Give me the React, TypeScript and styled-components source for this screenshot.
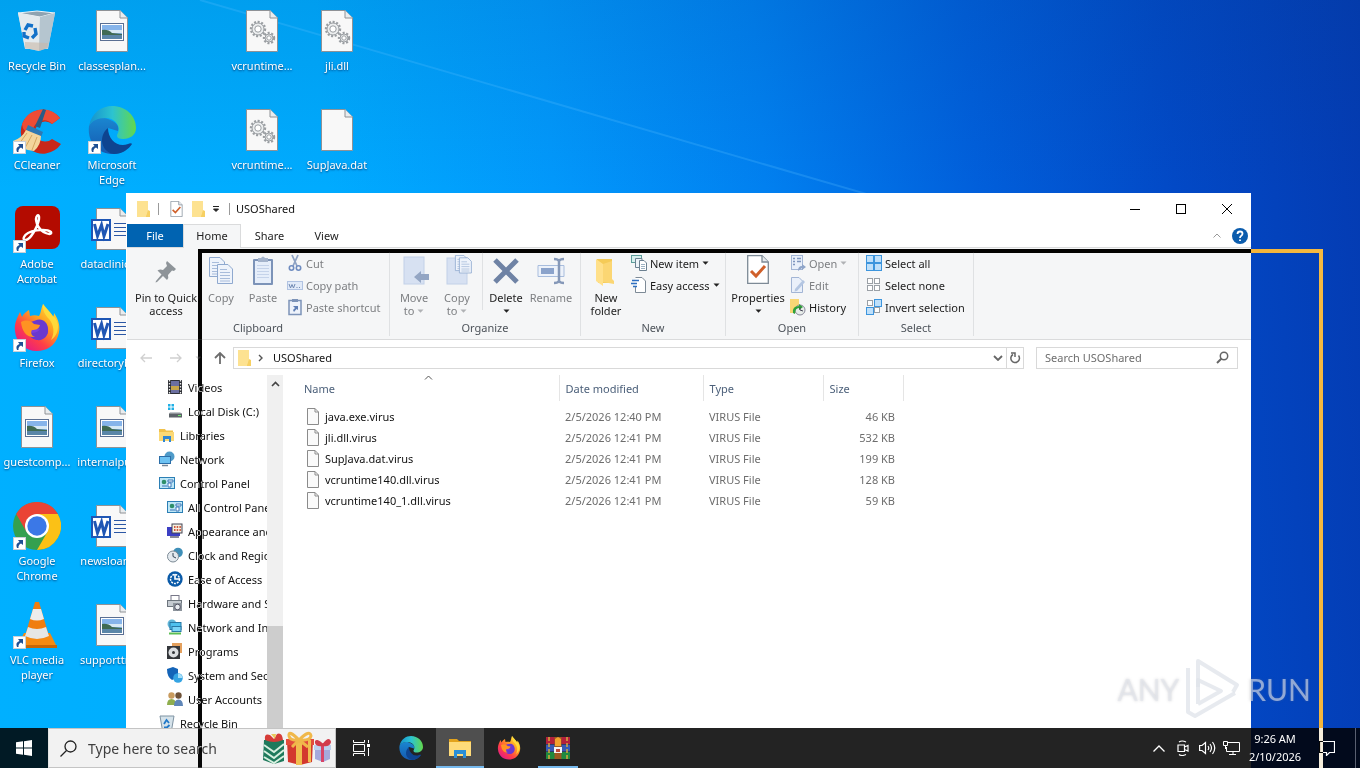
import React from 'react';
import styled, { createGlobalStyle } from 'styled-components';

const GlobalStyle = createGlobalStyle`
  *, *::before, *::after { box-sizing: border-box; }
  body { margin: 0; background: #0357c5; }
  button, input { font: inherit; color: inherit; }
  body, button, input { font-family: 'Noto Sans', 'Open Sans', sans-serif; font-size: 11px; }
  button { border: 0; padding: 0; background: none; }
  svg { display: block; flex: none; }
`;

/* ---------- desktop ---------- */

const Desktop = styled.main`
  position: relative;
  min-height: 100vh;
  overflow: hidden;
  background:
    linear-gradient(180deg, rgba(0, 60, 120, 0.12), rgba(0, 60, 120, 0) 190px),
    linear-gradient(86deg, #00b0ff 0%, #00abff 26%, #0298fb 42%, #0180f0 57%, #015fdb 72%, #0249c6 86%, #043bb2 100%);
`;

const Wallpaper = styled.svg`
  position: absolute;
  top: 0;
  left: 0;
`;

const IconGrid = styled.ul`
  position: relative;
  display: grid;
  grid-template-columns: repeat(5, 75px);
  grid-auto-rows: 99px;
  margin: 0;
  padding: 0;
  list-style: none;
`;

const IconCell = styled.li<{ $col: number; $row: number }>`
  grid-column: ${p => p.$col};
  grid-row: ${p => p.$row};
`;

const DesktopButton = styled.button`
  display: flex;
  flex-direction: column;
  align-items: center;
  gap: 3px;
  width: 100%;
  padding: 7px 1px 0 0;
  color: #fff;
  line-height: 15px;
  text-align: center;
  text-shadow: 0 1px 2px rgba(0, 30, 80, 0.75);
`;

const IconArt = styled.span`
  position: relative;
  width: 48px;
  height: 48px;
`;

const IconLabel = styled.span`
  max-width: 70px;
`;

const ShortcutBadge = styled.svg`
  position: absolute;
  left: 0;
  bottom: 0;
`;

function RecycleBin() {
  return (
    <svg width="48" height="48" viewBox="0 0 48 48">
      <path d="M5 6 L42 6 L35 42 L12 42Z" fill="#c9d6de" />
      <path d="M5 6 L24 4 L42 6 L27 10Z" fill="#8fa3b1" stroke="#eef4f8" strokeWidth="1" />
      <path d="M5 6 L27 10 L26 44 L12 41Z" fill="#e3eaee" />
      <path d="M27 10 L42 6 L35 41 L26 44Z" fill="#b5c5cf" />
      <path d="M12 35 L35 36 L34 41 L26 44 L12 41Z" fill="#c8b8a8" opacity=".6" />
      <g fill="none" stroke="#1271c9" strokeWidth="3.4">
        <path d="M12 23 L15 18 L20 19" />
        <path d="M22 21 L23 27 L19 31" />
        <path d="M16 31 L11 29 L11 25" />
      </g>
    </svg>
  );
}

function Page({ children }: { children?: React.ReactNode }) {
  return (
    <svg width="48" height="48" viewBox="0 0 48 48">
      <path d="M8.500 3.500 H32 L39.500 11 V44.500 H8.500Z" fill="#f8f8f8" stroke="#8f9296" />
      <path d="M32 3.500 V11 H39.500" fill="#e9ecee" stroke="#8f9296" />
      {children}
    </svg>
  );
}

const PicturePage = () => (
  <Page>
    <rect x="12.500" y="16.500" width="23" height="17" fill="#fff" stroke="#5a6f93" />
    <rect x="14" y="18" width="20" height="14" fill="#86b4ea" />
    <path d="M14 23 h20 v3 h-20z" fill="#d7e9f5" />
    <path d="M14 23 Q20 22 24 26 L34 27 V29 H14Z" fill="#3f6a53" />
    <path d="M14 28 H34 V32 H14Z" fill="#5a86a8" />
  </Page>
);

const Gear = ({ x, y, r }: { x: number; y: number; r: number }) => (
  <g transform={`translate(${x} ${y})`} fill="none" stroke="#9a9ea2">
    <circle r={r} strokeWidth="2.400" strokeDasharray="2 1.6" />
    <circle r={r - 1} fill="#eceeef" strokeWidth="1" />
    <circle r={r / 2 - 0.3} fill="#fff" strokeWidth="1" />
  </g>
);

const GearPage = () => (
  <Page>
    <Gear x={20} y={22} r={7} />
    <Gear x={31} y={31} r={5} />
  </Page>
);

const BlankPage = () => <Page />;

const WordPage = () => (
  <Page>
    <path d="M26 18.500 H46 M26 22.500 H46 M26 26.500 H46 M26 30.500 H46" stroke="#2b57a5" />
    <rect x="3" y="14" width="20" height="22" fill="#1f56b4" />
    <rect x="5" y="16" width="16" height="18" fill="#fff" />
    <path d="M6.500 19 L9.500 31 L13.500 20 L16 31 L20 19" fill="none" stroke="#1f56b4" strokeWidth="3" />
  </Page>
);

function CCleaner() {
  return (
    <svg width="48" height="48" viewBox="0 0 48 48">
      <path d="M47 12 A22 22 0 1 0 48 38 L39 33 A10 10 0 1 1 39 18Z" fill="#c8281a" />
      <path d="M47 12 A22 22 0 0 0 9 18 Q10 28 20 26 A11 11 0 0 1 39 18Z" fill="#ee4c35" />
      <path d="M30 3 L33 4 L27 22 L22 20Z" fill="#2a5c86" />
      <path d="M15 19 L30 26 L28 31 L13 24Z" fill="#2e78b4" />
      <path d="M13 24 L28 30 Q28 39 21 45 Q8 44 0 35 Q9 32 13 24Z" fill="#f4d59c" />
      <path d="M14 27 L6 38 M19 29 L12 42 M24 31 L19 44" stroke="#d5a660" />
    </svg>
  );
}

function Edge({ size }: { size: number }) {
  return (
    <svg width={size} height={size} viewBox="0 0 48 48">
      <defs>
        <linearGradient id="edgeTop" x1="0" x2="1">
          <stop offset="0" stopColor="#1592cf" />
          <stop offset=".5" stopColor="#2cc3d0" />
          <stop offset="1" stopColor="#63d84b" />
        </linearGradient>
        <linearGradient id="edgeLeft" x1="0" x2="0" y1="0" y2="1">
          <stop offset="0" stopColor="#1a86d0" />
          <stop offset="1" stopColor="#1559b0" />
        </linearGradient>
      </defs>
      <path d="M1 20 C5 12 14 11 20 13 C28 16 32 20 30 25 L20 22 C14 30 20 42 32 43 C37 43 41 40 44 37 C40 44 33 48 25 48 C10 48 -1 36 1 20Z" fill="url(#edgeLeft)" />
      <path d="M1 20 C4 6 14 0 24 0 C38 0 48 10 48 22 C48 29 42 33 35 33 C29 33 28 30 30 27 C33 20 27 12 17 12 C9 12 4 15 1 20Z" fill="url(#edgeTop)" />
      <path d="M20 22 C10 30 13 46 26 48 C34 48 41 43 44 38 C43 37 42 37 40 38 C30 42 20 34 20 22Z" fill="#0e4490" />
    </svg>
  );
}

function Acrobat() {
  return (
    <svg width="48" height="48" viewBox="0 0 48 48">
      <rect x="2" y="1" width="45" height="43" rx="8" fill="#b30b00" />
      <path d="M11 32 C14 25 33 23 38 27 C40 31 28 29 24 19 C21 10 27 7 26 14 C25 21 17 36 12 35 C11 35 10 34 11 32Z" fill="none" stroke="#fff" strokeWidth="2.400" />
    </svg>
  );
}

function Firefox({ size }: { size: number }) {
  return (
    <svg width={size} height={size} viewBox="0 0 48 48">
      <defs>
        <linearGradient id="fox" x1="1" x2="0.200" y1="0" y2="1">
          <stop offset="0" stopColor="#fff04a" />
          <stop offset=".4" stopColor="#ffa31f" />
          <stop offset=".7" stopColor="#ff3f46" />
          <stop offset="1" stopColor="#e2168c" />
        </linearGradient>
      </defs>
      <path d="M30 0 C33 5 38 8 40 13 C41 11 41 10 41 9 C46 16 48 24 45 32 C42 42 33 47 24 47 C12 47 3 39 2 27 C1 20 4 14 7 8 L9 13 C11 9 14 7 16 6 L17 12 C20 11 23 11 26 12 C28 9 28 4 30 0Z" fill="url(#fox)" />
      <circle cx="25" cy="26" r="10" fill="#7a3fe0" />
      <path d="M22 17 C28 13 35 18 35 25 C36 32 30 37 24 36 C18 35 15 31 15 27 C19 30 25 29 27 25 L19 23 L13 21 C16 18 20 17 22 17Z" fill="#6b38cf" />
      <path d="M8 18 C14 15 18 17 21 20 L27 21 C26 25 23 26 19 26 C17 29 19 32 22 33 C14 34 9 28 8 18Z" fill="#ff9322" />
      <path d="M30 0 C29 6 32 11 36 15 C41 21 42 29 38 36 C46 31 48 18 40 12Z" fill="#ffdf3c" opacity=".85" />
    </svg>
  );
}

function Chrome() {
  return (
    <svg width="48" height="48" viewBox="0 0 48 48">
      <circle cx="24" cy="24" r="24" fill="#34a04f" />
      <path d="M3.200 12 A24 24 0 0 1 44.800 12 L24 12 L13.600 30Z" fill="#ea4335" />
      <path d="M44.800 12 A24 24 0 0 1 24 48 L34.400 30 L24 12Z" fill="#fbc116" />
      <circle cx="24" cy="24" r="12" fill="#fff" />
      <circle cx="24" cy="24" r="9.700" fill="#3b78e7" />
    </svg>
  );
}

function Vlc() {
  return (
    <svg width="48" height="48" viewBox="0 0 48 48">
      <path d="M11 32 H37 L44 46 H4Z" fill="#f58a12" />
      <path d="M4 44 H44 V47 H4Z" fill="#c86606" />
      <path d="M22 1 H26 L36 35 Q24 41 12 35Z" fill="#f07d10" />
      <path d="M20 8 H28 L31 18 Q24 21 17 18Z" fill="#ececec" />
      <path d="M15 26 Q24 30 33 26 L36 35 Q24 41 12 35Z" fill="#e6e6e6" />
    </svg>
  );
}

function Shortcut() {
  return (
    <ShortcutBadge width="13" height="13" viewBox="0 0 13 13">
      <rect x=".5" y=".5" width="12" height="12" fill="#fff" stroke="#c8d0d8" />
      <path d="M5 3 H10 V8 L8 6.500 Q5 8 5.500 11 H4 Q2 6.500 6.500 5Z" fill="#1e4f93" />
    </ShortcutBadge>
  );
}

const desktopIcons: { col: number; row: number; label: string; art: React.ReactNode; link?: boolean }[] = [
  { col: 1, row: 1, label: 'Recycle Bin', art: <RecycleBin /> },
  { col: 1, row: 2, label: 'CCleaner', art: <CCleaner />, link: true },
  { col: 1, row: 3, label: 'Adobe Acrobat', art: <Acrobat />, link: true },
  { col: 1, row: 4, label: 'Firefox', art: <Firefox size={48} />, link: true },
  { col: 1, row: 5, label: 'guestcomp...', art: <PicturePage /> },
  { col: 1, row: 6, label: 'Google Chrome', art: <Chrome />, link: true },
  { col: 1, row: 7, label: 'VLC media player', art: <Vlc />, link: true },
  { col: 2, row: 1, label: 'classesplan...', art: <PicturePage /> },
  { col: 2, row: 2, label: 'Microsoft Edge', art: <Edge size={48} />, link: true },
  { col: 2, row: 3, label: 'dataclinics...', art: <WordPage /> },
  { col: 2, row: 4, label: 'directorybo...', art: <WordPage /> },
  { col: 2, row: 5, label: 'internalpub...', art: <PicturePage /> },
  { col: 2, row: 6, label: 'newsloans...', art: <WordPage /> },
  { col: 2, row: 7, label: 'supporttra...', art: <PicturePage /> },
  { col: 4, row: 1, label: 'vcruntime...', art: <GearPage /> },
  { col: 4, row: 2, label: 'vcruntime...', art: <GearPage /> },
  { col: 5, row: 1, label: 'jli.dll', art: <GearPage /> },
  { col: 5, row: 2, label: 'SupJava.dat', art: <BlankPage /> },
];

/* ---------- explorer window ---------- */

const Window = styled.section`
  position: absolute;
  top: 193px;
  left: 126px;
  right: 109px;
  bottom: 40px;
  display: flex;
  flex-direction: column;
  padding-left: 1px;
  overflow: hidden;
  background: #fff;
  color: #111;
`;

const TitleBar = styled.header`
  display: flex;
  align-items: center;
  height: 31px;
  padding: 0 1px 0 7px;
`;

const QuickButton = styled.button<{ $w?: number }>`
  display: flex;
  align-items: center;
  justify-content: center;
  width: ${p => p.$w ?? 18}px;
  height: 24px;
`;

const TitleRule = styled.span`
  width: 1px;
  height: 12px;
  margin: 0 6px;
  background: #9a9a9a;
`;

const Title = styled.h1`
  flex: 1;
  margin: 0;
  font-size: 11px;
  font-weight: 400;
`;

const CaptionButton = styled.button`
  display: flex;
  align-items: center;
  justify-content: center;
  width: 46px;
  height: 30px;
`;

const TabBar = styled.nav`
  display: flex;
  align-items: stretch;
  height: 24px;
  border-bottom: 1px solid #dadbdc;
`;

const Tab = styled.button<{ $kind?: 'file' | 'active' }>`
  width: ${p => (p.$kind === 'active' ? 58 : p.$kind === 'file' ? 56 : 57)}px;
  height: ${p => (p.$kind === 'active' ? 24 : 23)}px;
  padding-bottom: ${p => (p.$kind === 'active' ? 2 : 0)}px;
  border: ${p => (p.$kind === 'active' ? '1px solid #dadbdc' : '0')};
  border-bottom: 0;
  background: ${p => (p.$kind === 'file' ? '#0063b1' : p.$kind === 'active' ? '#f5f6f7' : 'transparent')};
  color: ${p => (p.$kind === 'file' ? '#fff' : '#222')};
`;

const TabSpacer = styled.span`
  flex: 1;
`;

const TabAction = styled.button`
  display: flex;
  align-items: center;
  justify-content: center;
  width: 23px;
`;

const Ribbon = styled.div`
  display: flex;
  height: 92px;
  padding-top: 4px;
  background: #f5f6f7;
  border-bottom: 1px solid #dadbdc;
`;

const Group = styled.section<{ $w: number }>`
  display: flex;
  flex-direction: column;
  width: ${p => p.$w}px;
  height: 84px;
  border-right: 1px solid #dfe1e3;
`;

const GroupBody = styled.div<{ $pad: number }>`
  display: flex;
  height: 70px;
  padding-left: ${p => p.$pad}px;
`;

const GroupLabel = styled.h2`
  margin: 0;
  color: #4d535a;
  font-size: 11px;
  font-weight: 400;
  line-height: 16px;
  text-align: center;
`;

const BigButton = styled.button<{ $w: number; $off?: boolean }>`
  display: flex;
  flex-direction: column;
  align-items: center;
  width: ${p => p.$w}px;
  padding-top: 3px;
  color: ${p => (p.$off ? '#7d7f82' : '#1c1c1c')};
  line-height: 13px;
  white-space: nowrap;
`;

const BigArt = styled.span`
  height: 36px;
`;

const Line = styled.span`
  display: flex;
  align-items: center;
  justify-content: center;
  gap: 3px;
  min-height: 13px;
`;

const Stack = styled.div`
  display: flex;
  flex-direction: column;
  padding-left: 2px;
`;

const SmallButton = styled.button<{ $off?: boolean }>`
  display: flex;
  align-items: center;
  gap: 3px;
  height: 22px;
  color: ${p => (p.$off ? '#7d7f82' : '#1c1c1c')};
  white-space: nowrap;
`;

const InnerRule = styled.span`
  width: 1px;
  height: 58px;
  margin-left: 4px;
  background: #dfe1e3;
`;

const AddressRow = styled.div`
  display: flex;
  align-items: center;
  height: 35px;
  padding: 0 13px 0 5px;
`;

const NavButton = styled.button<{ $w: number }>`
  display: flex;
  align-items: center;
  justify-content: center;
  width: ${p => p.$w}px;
  height: 22px;
`;

const AddressBox = styled.div`
  display: flex;
  flex: 1;
  align-items: center;
  height: 22px;
  padding-left: 3px;
  border: 1px solid #d9d9d9;
`;

const Crumb = styled.a`
  flex: 1;
  padding-left: 4px;
  color: #111;
  text-decoration: none;
`;

const RefreshButton = styled.button`
  display: flex;
  align-items: center;
  justify-content: center;
  width: 17px;
  height: 20px;
  border-left: 1px solid #d9d9d9;
`;

const SearchBox = styled.label`
  display: flex;
  align-items: center;
  width: 202px;
  height: 22px;
  margin-left: 12px;
  padding: 0 8px;
  border: 1px solid #d9d9d9;
`;

const PlainInput = styled.input`
  flex: 1;
  min-width: 0;
  padding: 0;
  border: 0;
  outline: 0;
  background: transparent;
  &::placeholder { color: #6d6d6d; opacity: 1; }
`;

const Content = styled.div`
  display: flex;
  flex: 1;
  min-height: 0;
`;

const TreePane = styled.aside`
  display: flex;
  width: 156px;
  overflow: hidden;
`;

const Tree = styled.ul`
  flex: 1;
  min-width: 0;
  margin: 0;
  padding: 0;
  overflow: hidden;
  list-style: none;
`;

const TreeItem = styled.li<{ $level: number }>`
  display: flex;
  align-items: center;
  gap: 5px;
  height: 24px;
  padding-left: ${p => (p.$level === 1 ? 32 : 40)}px;
  white-space: nowrap;
`;

const ScrollTrack = styled.div`
  display: flex;
  flex-direction: column;
  justify-content: space-between;
  width: 16px;
  background: #f0f0f0;
`;

const ScrollUp = styled.button`
  display: flex;
  align-items: center;
  justify-content: center;
  height: 18px;
`;

const ScrollThumb = styled.span`
  height: 29%;
  background: #cdcdcd;
`;

const FileTable = styled.table`
  align-self: flex-start;
  width: 620px;
  border-collapse: collapse;
  table-layout: fixed;
  color: #6d6d6d;
`;

const HeadCell = styled.th<{ $first?: boolean; $w: number }>`
  position: relative;
  width: ${p => p.$w}px;
  height: 26px;
  padding: 0 0 0 ${p => (p.$first ? 21 : 6)}px;
  border-right: 1px solid #e5e5e5;
  color: #4c607a;
  font-weight: 400;
  text-align: left;
`;

const SortMark = styled.svg`
  position: absolute;
  top: 0;
  left: 51%;
`;

const HeadGap = styled.tr`
  height: 5px;
`;

const Cell = styled.td<{ $right?: boolean }>`
  height: 21px;
  padding: 0 ${p => (p.$right ? 8 : 0)}px 0 6px;
  text-align: ${p => (p.$right ? 'right' : 'left')};
`;

const FileName = styled.span`
  display: flex;
  align-items: center;
  gap: 5px;
  padding-left: 17px;
  color: #111;
`;

const Folder = ({ w = 14, h = 18 }: { w?: number; h?: number }) => (
  <svg width={w} height={h} viewBox="0 0 14 18">
    <path d="M1 1 H12 V17 H1Z" fill="#f6cf62" />
    <path d="M1 1 H12 V12 L10 17 H1Z" fill="#fde291" />
    <path d="M12 10 L14 11 V17 H10Z" fill="#f7d062" />
  </svg>
);

const CheckPage = ({ w, h }: { w: number; h: number }) => (
  <svg width={w} height={h} viewBox="0 0 22 29">
    <path d="M.7 .7 H15 L21.300 7 V28.300 H.7Z" fill="#fff" stroke="#7d8a96" strokeWidth="1.300" />
    <path d="M15 .7 V7 H21.300" fill="#e8ebee" stroke="#7d8a96" strokeWidth="1.300" />
    <path d="M4 16 L9 21 L18 11" fill="none" stroke="#d0602b" strokeWidth="3" />
  </svg>
);

const Caret = ({ c = '#222' }: { c?: string }) => (
  <svg width="7" height="4" viewBox="0 0 7 4"><path d="M.5 .5 H6.500 L3.500 3.700Z" fill={c} /></svg>
);

const LinedPage = ({ x, y }: { x: number; y: number }) => (
  <g transform={`translate(${x} ${y})`}>
    <path d="M.5 .5 H11 L15.500 5 V19.500 H.5Z" fill="#eef3fb" stroke="#8fa9cf" />
    <path d="M3 5.500 H10 M3 8.500 H13 M3 11.500 H13 M3 14.500 H13 M3 17 H13" stroke="#a8bcdb" />
  </g>
);

const PinIcon = () => (
  <svg width="24" height="32" viewBox="0 0 24 32">
    <path d="M13 6 L22 14 L20 16 L18 15.500 L14 20 Q15 23 13 25 L9 21 L3 27 L1.500 27.500 L2 26 L7.500 19.500 L3.500 15.500 Q6 14 9 15 L13 11 L12 8Z" fill="#8e9499" />
  </svg>
);
const CopyIcon = () => (
  <svg width="28" height="32" viewBox="0 0 28 32"><LinedPage x={2} y={2} /><LinedPage x={10} y={9} /></svg>
);
const PasteIcon = () => (
  <svg width="24" height="32" viewBox="0 0 24 32">
    <rect x="2" y="4" width="20" height="26" rx="1" fill="#7c93b8" />
    <rect x="4" y="6" width="16" height="22" fill="#e6eefa" />
    <path d="M7 3 H10 Q12 0 14 3 H17 V7 H7Z" fill="#a5b4cc" />
    <path d="M6 10.500 H18 M6 13.500 H18 M6 16.500 H18 M6 19.500 H18 M6 22.500 H18" stroke="#c5d3ea" />
  </svg>
);
const MoveIcon = () => (
  <svg width="30" height="32" viewBox="0 0 30 32">
    <rect x="5" y="2" width="20" height="27" fill="#d7e1f2" stroke="#c2d0e8" />
    <path d="M15 22 L22 16 V19 H30 V25 H22 V28Z" fill="#94a6c4" />
  </svg>
);
const CopyToIcon = () => (
  <svg width="30" height="32" viewBox="0 0 30 32">
    <rect x="5" y="3" width="20" height="26" fill="#d7e1f2" stroke="#c2d0e8" />
    <g transform="translate(13 0) scale(.8)"><LinedPage x={0} y={0} /><LinedPage x={5} y={3} /></g>
  </svg>
);
const DeleteIcon = () => (
  <svg width="28" height="32" viewBox="0 0 28 32">
    <path d="M3 5 L25 27 M25 5 L3 27" stroke="#6f83a5" strokeWidth="5" />
  </svg>
);
const RenameIcon = () => (
  <svg width="30" height="32" viewBox="0 0 30 32">
    <path d="M2 10.500 H28 V21.500 H2Z" fill="#edf2fa" stroke="#a8bddd" />
    <rect x="5" y="13" width="13" height="6" fill="#8ba3cb" />
    <path d="M18 4 Q22 4 23 6 Q24 4 28 4 M23 6 V26 M18 28 Q22 28 23 26 Q24 28 28 28" fill="none" stroke="#8598b8" strokeWidth="2.500" />
  </svg>
);
const NewFolderIcon = () => (
  <svg width="24" height="32" viewBox="0 0 24 32">
    <path d="M3 4 H18 V28 H4Z" fill="#f5cb57" />
    <path d="M2 4 L9 9 V31 L2 26Z" fill="#ffe08a" />
    <path d="M9 9 L18 6 V24 L20 26 V29 L9 27Z" fill="#fbd673" />
  </svg>
);

const Small = ({ children }: { children: React.ReactNode }) => (
  <svg width="16" height="18" viewBox="0 0 16 18">{children}</svg>
);
const CutIcon = () => (
  <Small>
    <path d="M5 1 L10 12 M11 1 L6 12" stroke="#8fa3c4" strokeWidth="1.800" />
    <circle cx="4.500" cy="14" r="2.200" fill="none" stroke="#6f8cc0" strokeWidth="1.600" />
    <circle cx="11.500" cy="14" r="2.200" fill="none" stroke="#6f8cc0" strokeWidth="1.600" />
  </Small>
);
const CopyPathIcon = () => (
  <Small>
    <rect x=".5" y="5.500" width="15" height="8" fill="#e1eaf8" stroke="#b1c3e2" />
    <path d="M2 8 L3.500 12 L5 8.500 L6.500 12 L8 8 M9.500 11.500 H10.500 M12 11.500 H13" stroke="#7089b3" fill="none" />
  </Small>
);
const PasteShortcutIcon = () => (
  <Small>
    <rect x="2" y="2.500" width="12" height="14" fill="#eef3fb" stroke="#7c93b8" strokeWidth="1.500" />
    <rect x="5" y="1" width="6" height="3" fill="#7c93b8" />
    <path d="M6 8 H11 V12 L9.500 11 L7 14 L6 12 L8 10Z" fill="#5f7fb5" />
  </Small>
);
const NewItemIcon = () => (
  <Small>
    <rect x=".5" y="1.500" width="10" height="7" fill="#d8f0ee" stroke="#5d9d9a" />
    <path d="M4.500 4.500 H11 V13.500 H4.500Z" fill="#eef4f8" stroke="#6b8090" />
    <path d="M8.500 6.500 H13 L15.500 9 V16.500 H8.500Z" fill="#fff" stroke="#6b8090" />
    <path d="M10 10.500 H14 M10 12.500 H14 M10 14.500 H14" stroke="#9db2c2" />
  </Small>
);
const EasyIcon = () => (
  <Small>
    <path d="M4.500 1.500 H11 L14.500 5 V16.500 H4.500 V10" fill="#fff" stroke="#7d8a96" />
    <path d="M1 4.500 H8 M0 7.500 H6 M2 10.500 H6" stroke="#2f6fc0" strokeWidth="1.400" />
  </Small>
);
const OpenIcon = () => (
  <Small>
    <rect x="1.500" y="1.500" width="11" height="14" fill="#e8effa" stroke="#a2b5d5" />
    <path d="M3 4.500 H5 M3 7.500 H5 M3 10.500 H5 M7 4.500 H11 M7 7.500 H11" stroke="#7e95bd" strokeWidth="1.500" />
    <path d="M8 17 Q8 12 12 12 V10 L16 13 L12 16 V14Z" fill="#8fa5c9" />
  </Small>
);
const EditIcon = () => (
  <Small>
    <path d="M1.500 1.500 H9 L12.500 5 V16.500 H1.500Z" fill="#eaf0fa" stroke="#a2b5d5" />
    <path d="M5 13 L13 4 L15 6 L7 15 L4.500 15.500Z" fill="#b4c6e2" />
  </Small>
);
const HistoryIcon = () => (
  <Small>
    <path d="M0 1 H9 V15 H0Z" fill="#f8d775" />
    <circle cx="10" cy="12" r="5" fill="#e7ece9" stroke="#889" />
    <path d="M3 15 Q2 8 9 8 V6 L13 9 L9 12 V10 Q5 10 5 16Z" fill="#2fa33a" />
    <path d="M10 9 V12 L13 13" stroke="#445" fill="none" />
  </Small>
);
const Squares = ({ on }: { on: boolean[] }) => (
  <Small>
    {on.map((lit, i) => (
      <rect
        key={i}
        x={i % 2 ? 8.5 : lit ? 0.5 : 1.5}
        y={i > 1 ? 9.5 : lit ? 1.5 : 2.5}
        width={lit ? 7 : 5}
        height={lit ? 7 : 5}
        fill={lit ? '#bfe0fa' : '#fff'}
        stroke={lit ? '#3d95dd' : '#9aa0a6'}
      />
    ))}
  </Small>
);

const Tiny = ({ children }: { children: React.ReactNode }) => (
  <svg width="16" height="16" viewBox="0 0 16 16">{children}</svg>
);
const PanelGlyph = () => (
  <Tiny>
    <rect x=".5" y="2.500" width="15" height="11" fill="#bfe7f7" stroke="#2c7fb5" />
    <circle cx="5" cy="7" r="2.300" fill="#2e8f6a" />
    <path d="M9 5 H14 V7 H9Z M9 8 H12 V12 H9Z M3 11 H8" fill="#fff" stroke="#3c77b8" />
  </Tiny>
);

const treeItems: { label: string; level: number; art: React.ReactNode }[] = [
  { label: 'Videos', level: 2, art: <Tiny><rect x="1" y="1" width="14" height="14" fill="#2e3036" /><rect x="4" y="2" width="8" height="12" fill="#6b6fa0" /><path d="M4 7 H12 V11 H4Z" fill="#c8a648" /><path d="M2.500 1 V15 M13.500 1 V15" stroke="#eee" strokeWidth="1.300" strokeDasharray="1.500 1.500" /></Tiny> },
  { label: 'Local Disk (C:)', level: 2, art: <Tiny><path d="M1 1 H3.500 V3.500 H1Z M4.500 1 H7 V3.500 H4.500Z M1 4.500 H3.500 V7 H1Z M4.500 4.500 H7 V7 H4.500Z" fill="#1fb0e6" /><path d="M3 9 H13 L15 11 H2Z" fill="#c4c8cc" /><rect x="2" y="10.500" width="13" height="4" fill="#5c6268" /><path d="M11 12.500 H14" stroke="#6cf06c" /></Tiny> },
  { label: 'Libraries', level: 1, art: <Tiny><path d="M0 2 H6 L7 3.500 H14 V14 H0Z" fill="#f0c14b" /><path d="M0 5 H15 V14 H0Z" fill="#fbd976" /><path d="M4 15 V9 H12 V15 H10 V12 H6 V15Z" fill="#2e86d4" /></Tiny> },
  { label: 'Network', level: 1, art: <Tiny><circle cx="10.500" cy="5.500" r="5" fill="#4f9bc9" /><rect x="0" y="5" width="12" height="8" fill="#2c6ea8" /><rect x="1" y="6" width="10" height="6" fill="#6dc2f2" /><path d="M3 14.500 H9" stroke="#789" strokeWidth="1.500" /></Tiny> },
  { label: 'Control Panel', level: 1, art: <PanelGlyph /> },
  { label: 'All Control Panel Items', level: 2, art: <PanelGlyph /> },
  { label: 'Appearance and Personalization', level: 2, art: <Tiny><rect x="0" y="4" width="13" height="9" fill="#3c3fc4" /><rect x="5" y="1" width="10" height="9" fill="#f4f0e2" stroke="#445" /><path d="M7 4 H14 M7 7 H14" stroke="#d0583b" strokeWidth="2" strokeDasharray="1.500 1.200" /><path d="M3 14 H12" stroke="#889" strokeWidth="2" /></Tiny> },
  { label: 'Clock and Region', level: 2, art: <Tiny><circle cx="11" cy="5.500" r="4.800" fill="#3f8fb8" /><circle cx="6" cy="9.500" r="5.500" fill="#e4eaef" stroke="#7d8b96" /><path d="M6 6 V9.500 L9 11" stroke="#345" fill="none" /></Tiny> },
  { label: 'Ease of Access', level: 2, art: <Tiny><circle cx="8" cy="8" r="7.700" fill="#0a5aa8" /><circle cx="8" cy="8" r="4.500" fill="none" stroke="#fff" strokeWidth="1.500" strokeDasharray="2 1" /><path d="M8 3 V8 H13" stroke="#fff" strokeWidth="1.600" fill="none" /></Tiny> },
  { label: 'Hardware and Sound', level: 2, art: <Tiny><rect x="4" y=".5" width="8" height="5" fill="#fff" stroke="#778" /><rect x=".5" y="5.500" width="14" height="6" fill="#c5cbd1" stroke="#6d757d" /><rect x="6" y="8" width="9" height="8" fill="#8c949c" /><circle cx="10.500" cy="12" r="2.800" fill="#e8ecf0" stroke="#556" /></Tiny> },
  { label: 'Network and Internet', level: 2, art: <Tiny><circle cx="5" cy="5" r="4.500" fill="#62b6d8" /><rect x="3" y="3.500" width="11" height="7" fill="#4fc1ee" stroke="#2878a5" /><rect x="5" y="7.500" width="9" height="5" fill="#7ad4f7" stroke="#2878a5" /><path d="M2 14.500 H14" stroke="#5cbf54" strokeWidth="2" /></Tiny> },
  { label: 'Programs', level: 2, art: <Tiny><rect x="5" y="0" width="10" height="10" fill="#e3a05e" /><rect x="0" y="3" width="13" height="13" fill="#33363a" /><circle cx="6.500" cy="9.500" r="5" fill="#dcdfe2" /><circle cx="6.500" cy="9.500" r="1.500" fill="#33363a" /></Tiny> },
  { label: 'System and Security', level: 2, art: <Tiny><path d="M0 2 L6 0 L11 2 V7 Q10 11 5 13 Q0 10 0 2Z" fill="#1464b8" /><circle cx="11" cy="11" r="4.800" fill="#35a4e3" /><path d="M11 11 V6.500 A4.500 4.500 0 0 1 15.500 11Z" fill="#a5def8" /></Tiny> },
  { label: 'User Accounts', level: 2, art: <Tiny><circle cx="4.500" cy="4.500" r="3.200" fill="#c99b5e" /><path d="M0 14 Q0 8 4.500 8 Q9 8 9 14Z" fill="#8fae4e" /><circle cx="11.500" cy="4.500" r="3.200" fill="#6f5238" /><path d="M7 15 Q7 8.500 11.500 8.500 Q16 8.500 16 15Z" fill="#5f86b8" /></Tiny> },
  { label: 'Recycle Bin', level: 1, art: <Tiny><path d="M1 1 H15 L12.500 15.500 H3.500Z" fill="#d5e2ea" stroke="#7f93a2" /><path d="M5 9 L7.500 5 L10 8 M10.500 10 L8 12.500 H5" stroke="#2078c8" strokeWidth="1.800" fill="none" /></Tiny> },
];

const files = [
  ['java.exe.virus', '2/5/2026 12:40 PM', '46 KB'],
  ['jli.dll.virus', '2/5/2026 12:41 PM', '532 KB'],
  ['SupJava.dat.virus', '2/5/2026 12:41 PM', '199 KB'],
  ['vcruntime140.dll.virus', '2/5/2026 12:41 PM', '128 KB'],
  ['vcruntime140_1.dll.virus', '2/5/2026 12:41 PM', '59 KB'],
];

function ExplorerRibbon() {
  return (
    <Ribbon>
      <Group $w={263}>
        <GroupBody $pad={4}>
          <BigButton $w={70}><BigArt><PinIcon /></BigArt><Line>Pin to Quick</Line><Line>access</Line></BigButton>
          <BigButton $w={40} $off><BigArt><CopyIcon /></BigArt><Line>Copy</Line></BigButton>
          <BigButton $w={44} $off><BigArt><PasteIcon /></BigArt><Line>Paste</Line></BigButton>
          <Stack>
            <SmallButton $off><CutIcon />Cut</SmallButton>
            <SmallButton $off><CopyPathIcon />Copy path</SmallButton>
            <SmallButton $off><PasteShortcutIcon />Paste shortcut</SmallButton>
          </Stack>
        </GroupBody>
        <GroupLabel>Clipboard</GroupLabel>
      </Group>
      <Group $w={191}>
        <GroupBody $pad={2}>
          <BigButton $w={44} $off><BigArt><MoveIcon /></BigArt><Line>Move</Line><Line>to <Caret c="#b0b2b5" /></Line></BigButton>
          <BigButton $w={42} $off><BigArt><CopyToIcon /></BigArt><Line>Copy</Line><Line>to <Caret c="#b0b2b5" /></Line></BigButton>
          <InnerRule />
          <BigButton $w={46}><BigArt><DeleteIcon /></BigArt><Line>Delete</Line><Line><Caret /></Line></BigButton>
          <BigButton $w={44} $off><BigArt><RenameIcon /></BigArt><Line>Rename</Line></BigButton>
        </GroupBody>
        <GroupLabel>Organize</GroupLabel>
      </Group>
      <Group $w={145}>
        <GroupBody $pad={2}>
          <BigButton $w={46}><BigArt><NewFolderIcon /></BigArt><Line>New</Line><Line>folder</Line></BigButton>
          <Stack>
            <SmallButton><NewItemIcon />New item <Caret /></SmallButton>
            <SmallButton><EasyIcon />Easy access <Caret /></SmallButton>
          </Stack>
        </GroupBody>
        <GroupLabel>New</GroupLabel>
      </Group>
      <Group $w={133}>
        <GroupBody $pad={2}>
          <BigButton $w={60}><BigArt><CheckPage w={22} h={29} /></BigArt><Line>Properties</Line><Line><Caret /></Line></BigButton>
          <Stack>
            <SmallButton $off><OpenIcon />Open <Caret c="#b0b2b5" /></SmallButton>
            <SmallButton $off><EditIcon />Edit</SmallButton>
            <SmallButton><HistoryIcon />History</SmallButton>
          </Stack>
        </GroupBody>
        <GroupLabel>Open</GroupLabel>
      </Group>
      <Group $w={115}>
        <GroupBody $pad={5}>
          <Stack>
            <SmallButton><Squares on={[true, true, true, true]} />Select all</SmallButton>
            <SmallButton><Squares on={[false, false, false, false]} />Select none</SmallButton>
            <SmallButton><Squares on={[false, true, true, false]} />Invert selection</SmallButton>
          </Stack>
        </GroupBody>
        <GroupLabel>Select</GroupLabel>
      </Group>
    </Ribbon>
  );
}

function Explorer() {
  return (
    <Window>
      <TitleBar>
        <QuickButton aria-label="Folder"><Folder /></QuickButton>
        <TitleRule />
        <QuickButton $w={22} aria-label="Properties"><CheckPage w={13} h={16} /></QuickButton>
        <QuickButton $w={22} aria-label="New folder"><Folder /></QuickButton>
        <QuickButton $w={14} aria-label="Customize">
          <svg width="8" height="8" viewBox="0 0 8 8"><path d="M1 1.500 H7 M1.500 4 H6.500 L4 6.500Z" fill="#222" stroke="#222" /></svg>
        </QuickButton>
        <TitleRule />
        <Title>USOShared</Title>
        <CaptionButton aria-label="Minimize"><svg width="10" height="10" viewBox="0 0 10 10"><path d="M0 5.500 H10" stroke="#000" /></svg></CaptionButton>
        <CaptionButton aria-label="Maximize"><svg width="10" height="10" viewBox="0 0 10 10"><rect x=".5" y=".5" width="9" height="9" fill="none" stroke="#000" /></svg></CaptionButton>
        <CaptionButton aria-label="Close"><svg width="10" height="10" viewBox="0 0 10 10"><path d="M0 0 L10 10 M10 0 L0 10" stroke="#000" /></svg></CaptionButton>
      </TitleBar>
      <TabBar>
        <Tab $kind="file">File</Tab>
        <Tab $kind="active">Home</Tab>
        <Tab>Share</Tab>
        <Tab>View</Tab>
        <TabSpacer />
        <TabAction aria-label="Collapse ribbon"><svg width="8" height="5" viewBox="0 0 8 5"><path d="M.5 4.500 L4 1 L7.500 4.500" fill="none" stroke="#999" /></svg></TabAction>
        <TabAction aria-label="Help">
          <svg width="16" height="16" viewBox="0 0 16 16">
            <circle cx="8" cy="8" r="8" fill="#0b5cad" />
            <path d="M5.500 6 Q5.500 3.500 8 3.500 Q10.500 3.500 10.500 5.800 Q10.500 7 9 8 Q8 8.600 8 10 M8 11.500 V13" fill="none" stroke="#fff" strokeWidth="1.800" />
          </svg>
        </TabAction>
      </TabBar>
      <ExplorerRibbon />
      <AddressRow>
        <NavButton $w={28} aria-label="Back"><svg width="13" height="10" viewBox="0 0 13 10"><path d="M12 5 H1 M5 1 L1 5 L5 9" fill="none" stroke="#d0d0d0" strokeWidth="1.300" /></svg></NavButton>
        <NavButton $w={30} aria-label="Forward"><svg width="13" height="10" viewBox="0 0 13 10"><path d="M1 5 H12 M8 1 L12 5 L8 9" fill="none" stroke="#d0d0d0" strokeWidth="1.300" /></svg></NavButton>
        <NavButton $w={16} aria-label="Recent locations"><Caret c="#ccc" /></NavButton>
        <NavButton $w={27} aria-label="Up"><svg width="12" height="12" viewBox="0 0 12 12"><path d="M6 12 V1.500 M1 6 L6 1 L11 6" fill="none" stroke="#6d6d6d" strokeWidth="1.800" /></svg></NavButton>
        <AddressBox>
          <Folder />
          <svg width="18" height="8" viewBox="0 0 18 8"><path d="M8 1 L11 4 L8 7" fill="none" stroke="#555" strokeWidth="1.400" /></svg>
          <Crumb href="#usoshared">USOShared</Crumb>
          <NavButton $w={16} aria-label="Previous locations"><svg width="10" height="6" viewBox="0 0 10 6"><path d="M1 1 L5 5 L9 1" fill="none" stroke="#666" strokeWidth="1.800" /></svg></NavButton>
          <RefreshButton aria-label="Refresh">
            <svg width="12" height="12" viewBox="0 0 12 12"><path d="M9.500 3.500 A4.300 4.300 0 1 1 4 2.500 M2 1 H6 V5" fill="none" stroke="#666" strokeWidth="1.500" /></svg>
          </RefreshButton>
        </AddressBox>
        <SearchBox>
          <PlainInput type="text" placeholder="Search USOShared" aria-label="Search USOShared" />
          <svg width="13" height="13" viewBox="0 0 13 13"><circle cx="8" cy="5" r="3.700" fill="none" stroke="#666" strokeWidth="1.500" /><path d="M5.500 7.500 L1 12" stroke="#666" strokeWidth="2" /></svg>
        </SearchBox>
      </AddressRow>
      <Content>
        <TreePane>
          <Tree>
            {treeItems.map(t => (
              <TreeItem key={t.label} $level={t.level}>{t.art}{t.label}</TreeItem>
            ))}
          </Tree>
          <ScrollTrack>
            <ScrollUp aria-label="Scroll up"><svg width="9" height="6" viewBox="0 0 9 6"><path d="M1 5 L4.500 1.500 L8 5" fill="none" stroke="#444" strokeWidth="1.600" /></svg></ScrollUp>
            <ScrollThumb />
          </ScrollTrack>
        </TreePane>
        <FileTable>
          <thead>
            <tr>
              <HeadCell $first $w={276}>
                Name
                <SortMark width="9" height="5" viewBox="0 0 9 5"><path d="M1 4.500 L4.500 1 L8 4.500" fill="none" stroke="#555" /></SortMark>
              </HeadCell>
              <HeadCell $w={144}>Date modified</HeadCell>
              <HeadCell $w={120}>Type</HeadCell>
              <HeadCell $w={80}>Size</HeadCell>
            </tr>
          </thead>
          <tbody>
            <HeadGap />
            {files.map(f => (
              <tr key={f[0]}>
                <Cell>
                  <FileName>
                    <svg width="14" height="17" viewBox="0 0 14 17"><path d="M1.500 .5 H9 L12.500 4 V16.500 H1.500Z M9 .5 V4 H12.500" fill="#fafafa" stroke="#8b8b8b" /></svg>
                    {f[0]}
                  </FileName>
                </Cell>
                <Cell>{f[1]}</Cell>
                <Cell>VIRUS File</Cell>
                <Cell $right>{f[2]}</Cell>
              </tr>
            ))}
          </tbody>
        </FileTable>
      </Content>
    </Window>
  );
}

/* ---------- taskbar ---------- */

const Taskbar = styled.footer`
  position: absolute;
  left: 0;
  right: 0;
  bottom: 0;
  display: flex;
  height: 40px;
  background:
    linear-gradient(#020a1c, #020a1c) right / 109px 100% no-repeat,
    #232323;
  color: #fff;
`;

const StartButton = styled.button`
  display: flex;
  align-items: center;
  justify-content: center;
  width: 48px;
  background: #011a25;
`;

const TaskSearch = styled.label`
  display: flex;
  align-items: center;
  gap: 11px;
  width: 288px;
  padding: 0 3px 0 11px;
  border: 1px solid #c4c4c4;
  border-left-color: #e4e4e4;
  background: #f2f2f2;
  color: #3c3c3c;
`;

const TaskInput = styled(PlainInput)`
  font-size: 14px;
  &::placeholder { color: #3f3f3f; }
`;

const TaskButton = styled.button<{ $active?: boolean; $open?: boolean; $w?: number }>`
  display: flex;
  align-items: center;
  justify-content: center;
  width: ${p => p.$w ?? 48}px;
  margin-right: 1px;
  background: linear-gradient(#76b9ed, #76b9ed) bottom / ${p => (p.$active ? '100%' : p.$open ? '40px' : '0')} 2px no-repeat
    ${p => (p.$active ? '#4f4f4f' : 'transparent')};
`;

const Tray = styled.div`
  display: flex;
  margin-left: auto;
`;

const TrayButton = styled.button<{ $w?: number }>`
  display: flex;
  align-items: center;
  justify-content: center;
  width: ${p => p.$w ?? 24}px;
  padding-right: ${p => (p.$w ? 4 : 0)}px;
`;

const Clock = styled.time`
  width: 60px;
  padding: 2px 0 0 4px;
  line-height: 18px;
  text-align: center;
  white-space: nowrap;
`;

const ShowDesktop = styled.button`
  width: 5px;
  border-left: 1px solid #5a6070;
`;

const Gifts = () => (
  <svg width="70" height="34" viewBox="0 0 70 34">
    <g>
      <path d="M2 9 H22 V30 L12 33 L1 29Z" fill="#1f7a5c" />
      <path d="M2 14 L12 21 L22 13 M2 20 L12 27 L22 19 M2 26 L12 32 L22 25" fill="none" stroke="#d8f0e0" strokeWidth="2" />
      <path d="M3 9 Q2 2 8 4 L12 8 L15 3 Q20 1 21 9 Q12 13 3 9Z" fill="#d63c38" />
      <path d="M9 3 L13 8 L14 3Z" fill="#e9c95b" />
    </g>
    <g>
      <path d="M25 9 H51 L50 31 L38 34 L26 31Z" fill="#d3382e" />
      <path d="M24 8 H52 V14 H24Z" fill="#e24c3c" />
      <path d="M34 9 H40 V34 H34Z M46 9 H49 V31 H46Z" fill="#f1bd4f" />
      <path d="M37 9 Q26 -2 27 5 Q28 10 37 9 Q48 -2 49 5 Q48 10 37 9 L30 16 M37 9 L46 16" fill="none" stroke="#f0b84a" strokeWidth="3" />
    </g>
    <g>
      <path d="M53 17 H68 V28 L61 31 L53 28Z" fill="#a5a9dc" />
      <path d="M52 14 H69 V19 H52Z" fill="#bcd0ee" />
      <path d="M59 14 H62 V31 H59Z" fill="#d84468" />
      <path d="M61 14 Q53 7 54 12 Q55 15 61 14 Q67 6 68 11 Q67 15 61 14Z" fill="#d23c4c" stroke="#d23c4c" strokeWidth="2" />
    </g>
  </svg>
);

function TaskbarView() {
  return (
    <Taskbar>
      <StartButton aria-label="Start">
        <svg width="16" height="16" viewBox="0 0 16 16"><path d="M0 2.300 L7 1.300 V7.600 H0Z M8 1.200 L16 0 V7.600 H8Z M0 8.400 H7 V14.700 L0 13.700Z M8 8.400 H16 V16 L8 14.800Z" fill="#fff" /></svg>
      </StartButton>
      <TaskSearch>
        <svg width="17" height="17" viewBox="0 0 17 17"><circle cx="10.500" cy="6.500" r="5.500" fill="none" stroke="#222" strokeWidth="1.300" /><path d="M6.500 10.500 L.5 16.500" stroke="#222" strokeWidth="1.300" /></svg>
        <TaskInput type="text" placeholder="Type here to search" aria-label="Type here to search" />
        <Gifts />
      </TaskSearch>
      <TaskButton $w={50} aria-label="Task view">
        <svg width="17" height="16" viewBox="0 0 17 16">
          <path d="M.5 0 V2.500 H11.500 V0 M.5 16 V13.500 H11.500 V16 M.5 4.500 H11.500 V11.500 H.5Z M15.500 0 V3 M15.500 8 V16" fill="none" stroke="#fff" />
          <rect x="14" y="4" width="3" height="3" fill="#fff" />
        </svg>
      </TaskButton>
      <TaskButton aria-label="Microsoft Edge"><Edge size={24} /></TaskButton>
      <TaskButton $active aria-label="File Explorer">
        <svg width="22" height="20" viewBox="0 0 22 20">
          <path d="M0 1 H8 L10 3 H22 V18 H0Z" fill="#e3a31c" />
          <path d="M0 4 H22 V18 H0Z" fill="#ffdb79" />
          <path d="M5 20 V12 H17 V20 H14 V16 H8 V20Z" fill="#2b8ed6" />
        </svg>
      </TaskButton>
      <TaskButton aria-label="Firefox"><Firefox size={24} /></TaskButton>
      <TaskButton $open aria-label="WinRAR">
        <svg width="24" height="22" viewBox="0 0 24 22">
          <rect y="0" width="24" height="7" fill="#b3203c" />
          <rect y="7.500" width="24" height="7" fill="#3859b5" />
          <rect y="15" width="24" height="7" fill="#1f8a3f" />
          <path d="M3 0 V22 M21 0 V22" stroke="#d8a83c" strokeWidth="1.500" strokeDasharray="4 2" />
          <rect x="8.500" y="0" width="7" height="22" fill="#9c5a22" />
          <path d="M9 2 L12 0 L15 2 V9 H9Z" fill="#f2a22c" />
          <rect x="8" y="10" width="8" height="6" fill="#f3f3f3" />
          <rect x="10" y="12" width="4" height="3" fill="#c04a3a" />
        </svg>
      </TaskButton>
      <Tray>
        <TrayButton aria-label="Show hidden icons"><svg width="12" height="7" viewBox="0 0 12 7"><path d="M.5 6.500 L6 1 L11.500 6.500" fill="none" stroke="#fff" strokeWidth="1.300" /></svg></TrayButton>
        <TrayButton aria-label="Meet now">
          <svg width="12" height="16" viewBox="0 0 12 16"><path d="M1 5 H7.500 V11.500 H1Z M7.500 7 L11 5.500 V11 L7.500 9.500 M2 2 Q5 0 9 2 M2 14.500 Q5 16.500 9 14.500" fill="none" stroke="#fff" strokeWidth="1.200" /></svg>
        </TrayButton>
        <TrayButton aria-label="Volume">
          <svg width="17" height="14" viewBox="0 0 17 14"><path d="M.6 4.500 H3 L6.500 1.500 V12.500 L3 9.500 H.6Z M9 5 Q10.500 7 9 9 M11 3 Q14 7 11 11 M13.500 1 Q18 7 13.500 13" fill="none" stroke="#fff" strokeWidth="1.200" /></svg>
        </TrayButton>
        <TrayButton aria-label="Network">
          <svg width="17" height="14" viewBox="0 0 17 14"><path d="M5 1.500 H16.500 V10.500 H3.500 V6 M10 10.500 V13.500 M6 13.500 H13 M.5 .5 H4.500 V4.500 H.5Z M2.500 4.500 V8" fill="none" stroke="#fff" /></svg>
        </TrayButton>
        <Clock dateTime="2026-02-10T09:26">9:26 AM<br />2/10/2026</Clock>
        <TrayButton $w={52} aria-label="Notifications">
          <svg width="16" height="16" viewBox="0 0 16 16"><path d="M.5 1.500 H15.500 V12.500 H10.500 L7.500 15.500 V12.500 H.5Z" fill="none" stroke="#fff" strokeWidth="1.200" /></svg>
        </TrayButton>
        <ShowDesktop aria-label="Show desktop" />
      </Tray>
    </Taskbar>
  );
}

/* ---------- overlays ---------- */

const InvertedFrame = styled.div`
  position: absolute;
  top: 249px;
  left: 198px;
  right: 37px;
  bottom: 0;
  border: 4px solid #f8f8f8;
  border-bottom: 0;
  mix-blend-mode: difference;
  pointer-events: none;
`;

const Watermark = styled.div`
  position: absolute;
  right: 49px;
  bottom: 48px;
  display: flex;
  align-items: center;
  gap: 7px;
  color: rgba(226, 230, 236, 0.6);
  font-family: Lato, 'Liberation Sans', sans-serif;
  font-size: 30px;
  line-height: 62px;
  text-shadow: 0 0 3px rgba(120, 120, 130, 0.3);
  pointer-events: none;
`;

export default function App() {
  return (
    <Desktop>
      <GlobalStyle />
      <Wallpaper width="900" height="262" viewBox="0 0 900 262">
        <path d="M200 0 L1100 262" stroke="#5cc0ff" strokeOpacity=".25" strokeWidth="2" />
      </Wallpaper>
      <IconGrid>
        {desktopIcons.map(i => (
          <IconCell key={`${i.col}-${i.row}`} $col={i.col} $row={i.row}>
            <DesktopButton>
              <IconArt>
                {i.art}
                {i.link && <Shortcut />}
              </IconArt>
              <IconLabel>{i.label}</IconLabel>
            </DesktopButton>
          </IconCell>
        ))}
      </IconGrid>
      <Explorer />
      <TaskbarView />
      <InvertedFrame />
      <Watermark>
        <span>ANY</span>
        <svg width="54" height="62" viewBox="0 0 54 62">
          <g fill="none" stroke="#dfe3e9" strokeOpacity=".75" strokeWidth="4" strokeLinejoin="round">
            <path d="M12 29 V3 L51 27 L47 34" />
            <path d="M2 10 V54 L9 58 L49 35" />
            <path d="M12 46 V22 L35 33 L12 46" />
          </g>
        </svg>
        <span>RUN</span>
      </Watermark>
    </Desktop>
  );
}
